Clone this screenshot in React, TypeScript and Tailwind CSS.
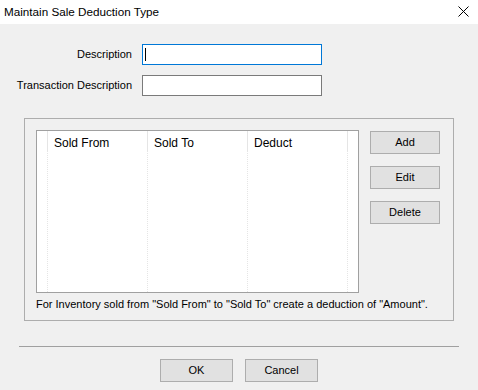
import React from 'react';

const font = { fontFamily: '"Liberation Sans", Arial, sans-serif' };

const WinButton: React.FC<{ label: string; w: string }> = ({ label, w }) => (
  <button className={`${w} h-[23px] bg-[#e1e1e1] border border-[#adadad] text-[11px] text-black leading-none`}>
    {label}
  </button>
);

const App: React.FC = () => {
  const cols = ['Sold From', 'Sold To', 'Deduct'];

  return (
    <div className="w-[478px] h-[390px] bg-[#f0f0f0] text-black text-[11px] overflow-hidden" style={font}>
      {/* title bar */}
      <div className="h-[24px] bg-white flex items-center justify-between pl-[4px] pr-[9px]">
        <span className="text-[11.7px]">Maintain Sale Deduction Type</span>
        <svg width="11" height="11" viewBox="0 0 11 11" className="mb-[2px]">
          <path d="M0.5 0.5 L10.5 10.5 M10.5 0.5 L0.5 10.5" stroke="#000" strokeWidth="1" />
        </svg>
      </div>

      {/* fields */}
      <div className="pt-[20px] grid grid-cols-[122px_180px] gap-x-[10px] gap-y-[10px] pl-[10px] items-center">
        <label className="text-right">Description</label>
        <div className="h-[21px] bg-white border border-[#0078d7] flex items-center pl-[2px]">
          <div className="w-px h-[13px] bg-black" />
        </div>
        <label className="text-right whitespace-nowrap">Transaction Description</label>
        <div className="h-[21px] bg-white border border-[#7a7a7a]" />
      </div>

      {/* group box */}
      <div className="ml-[24px] mt-[22px] w-[430px] h-[203px] border border-[#adadad] pl-[11px] pt-[11px]">
        <div className="flex gap-[11px]">
          <div className="w-[323px] h-[163px] bg-white border border-[#a0a0a0] flex">
            <div className="w-[11px] h-full border-r border-dotted border-[#e5e5e5] relative">
              <div className="absolute right-[-1px] top-[1px] h-[20px] w-px bg-[#e5e5e5]" />
            </div>
            {cols.map(c => (
              <div key={c} className="w-[100px] h-full border-r border-dotted border-[#e5e5e5] relative">
                <div className="absolute right-[-1px] top-[1px] h-[20px] w-px bg-[#e5e5e5]" />
                <div className="h-[23px] flex items-center pl-[6px] text-[12px]">{c}</div>
              </div>
            ))}
          </div>
          <div className="flex flex-col gap-[12px] pt-px">
            <WinButton label="Add" w="w-[70px]" />
            <WinButton label="Edit" w="w-[70px]" />
            <WinButton label="Delete" w="w-[70px]" />
          </div>
        </div>
        <div className="mt-[3px] h-[16px] flex items-center whitespace-nowrap">
          For Inventory sold from "Sold From" to "Sold To" create a deduction of "Amount".
        </div>
      </div>

      {/* separator */}
      <div className="ml-[19px] mt-[25px] w-[440px] h-px bg-[#a0a0a0]" />

      {/* footer buttons */}
      <div className="mt-[12px] pl-[160px] flex gap-[12px]">
        <WinButton label="OK" w="w-[73px]" />
        <WinButton label="Cancel" w="w-[73px]" />
      </div>
    </div>
  );
};

export default App;
